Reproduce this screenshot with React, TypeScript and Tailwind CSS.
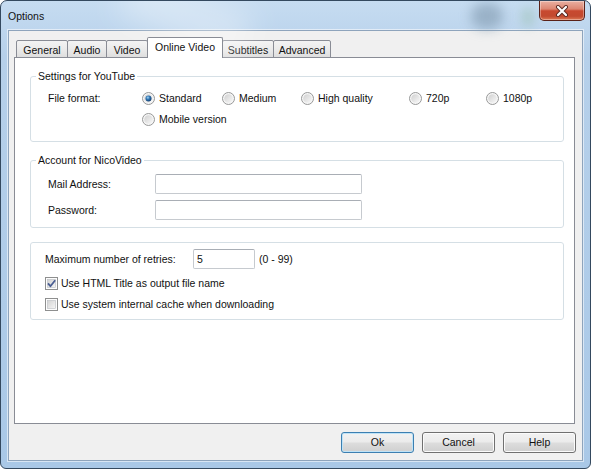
import type { ReactNode } from 'react'

const ui = "font-['Liberation_Sans',Arial,sans-serif] text-[10.5px] leading-[13px] text-[#111]"

const tabs = [
  { label: 'General', cls: 'w-[52px]' },
  { label: 'Audio', cls: 'w-[40px] -ml-px' },
  { label: 'Video', cls: 'w-[42px] -ml-px' },
  { label: 'Online Video', cls: 'w-[76px] -ml-px', active: true },
  { label: 'Subtitles', cls: 'w-[52px] -ml-px' },
  { label: 'Advanced', cls: 'w-[58px] -ml-px' },
]

const formats = [
  { label: 'Standard', cls: 'w-[80px]', checked: true },
  { label: 'Medium', cls: 'w-[79px]' },
  { label: 'High quality', cls: 'w-[108px]' },
  { label: '720p', cls: 'w-[77px]' },
  { label: '1080p', cls: 'w-[60px]' },
]

// shared gradients for the radio / checkbox glyphs
function Defs() {
  return (
    <svg className="absolute w-0 h-0" aria-hidden>
      <defs>
        <linearGradient id="ctl-fill" x1="0" y1="0" x2="1" y2="1">
          <stop offset="0" stopColor="#d0d0d0" />
          <stop offset="1" stopColor="#f8f8f8" />
        </linearGradient>
        <radialGradient id="ctl-dot" cx="40%" cy="35%" r="65%">
          <stop offset="0" stopColor="#a6d6f4" />
          <stop offset="0.45" stopColor="#3479b6" />
          <stop offset="1" stopColor="#123f72" />
        </radialGradient>
        <linearGradient id="cb-fill" x1="0" y1="0" x2="1" y2="1">
          <stop offset="0" stopColor="#d2d2d2" />
          <stop offset="1" stopColor="#f6f6f6" />
        </linearGradient>
      </defs>
    </svg>
  )
}

function Radio({ checked }: { checked?: boolean }) {
  return (
    <svg width="13" height="13" viewBox="0 0 13 13" className="shrink-0">
      <circle cx="6.5" cy="6.5" r="6" fill="#f6f6f6" stroke="#979898" />
      <circle cx="6.5" cy="6.5" r="4.3" fill="url(#ctl-fill)" />
      {checked && <circle cx="6.5" cy="6.5" r="3" fill="url(#ctl-dot)" />}
    </svg>
  )
}

function Checkbox({ checked }: { checked?: boolean }) {
  return (
    <svg width="13" height="13" viewBox="0 0 13 13" className="shrink-0">
      <rect x="0.5" y="0.5" width="12" height="12" fill="#fdfdfd" stroke="#8e8f8f" />
      <rect x="2.5" y="2.5" width="8" height="8" fill="url(#cb-fill)" stroke="#b9bcc1" strokeWidth="0.6" />
      {checked && (
        <path d="M3 6.4 L5.4 9.2 L10.2 3.2" fill="none" stroke="#4a5e92" strokeWidth="1.8" strokeLinejoin="round" />
      )}
    </svg>
  )
}

function TextBox({ cls, value }: { cls: string; value?: string }) {
  return (
    <div className={`h-[20px] flex items-center pl-[3px] bg-white border border-[#c6cacf] border-t-[#a9aeb5] rounded-[2px] ${cls}`}>
      {value}
    </div>
  )
}

function Group({ title, cls, children }: { title?: string; cls: string; children: ReactNode }) {
  return (
    <div className={`flex flex-col border border-[#d5dfe5] rounded-[3px] ${cls}`}>
      {title && <span className="self-start -mt-[7px] ml-[5px] px-[2px] bg-white">{title}</span>}
      {children}
    </div>
  )
}

function Button({ label, primary }: { label: string; primary?: boolean }) {
  return (
    <button
      className={`w-[73px] h-[21px] rounded-[3px] border bg-[linear-gradient(180deg,#f2f2f2_0%,#ebebeb_48%,#dddddd_52%,#cfcfcf_100%)] ${
        primary
          ? 'border-[#3c7fb1] shadow-[inset_0_0_0_1px_#bfe3f7]'
          : 'border-[#707070] shadow-[inset_0_0_0_1px_#fbfbfb]'
      }`}
    >
      {label}
    </button>
  )
}

function CloseButton() {
  return (
    <div className="relative mr-[5px] w-[46px] h-[20px] flex items-center justify-center rounded-b-[5px] border border-t-0 border-[#5a2118] bg-[linear-gradient(180deg,#e9b0a2_0%,#dc8672_42%,#c8492f_52%,#c24a2f_80%,#dd7a55_100%)] shadow-[inset_0_0_0_1px_rgba(255,255,255,0.35)]">
      <svg width="14" height="12" viewBox="0 0 14 12">
        <path d="M3 2 L11 10 M11 2 L3 10" stroke="#5b2a22" strokeWidth="4" strokeLinecap="round" />
        <path d="M3 2 L11 10 M11 2 L3 10" stroke="#ffffff" strokeWidth="2.2" strokeLinecap="round" />
      </svg>
    </div>
  )
}

export default function App() {
  return (
    <div className={`${ui} relative w-[591px] h-[469px] overflow-hidden flex flex-col rounded-t-[7px] rounded-b-[6px] border border-[#34495f] bg-[linear-gradient(180deg,#c6dcf1_0%,#b6d0ea_12%,#a9c8e7_100%)]`}>
      <Defs />

      {/* title bar */}
      <div className="relative h-[29px] flex items-start justify-between">
        <div className="pointer-events-none absolute left-[120px] -top-[14px] h-[56px] w-[130px] rotate-[25deg] bg-white/30 blur-[14px]" />
        <div className="pointer-events-none absolute left-[470px] top-[2px] h-[26px] w-[32px] rounded-full bg-[#7f98ae]/60 blur-[6px]" />
        <div className="pointer-events-none absolute left-[520px] top-[6px] h-[20px] w-[14px] rounded-full bg-[#9fc3b7]/50 blur-[5px]" />
        <span className="relative mt-[8px] ml-[7px] text-[10.5px] leading-[14px]">Options</span>
        <CloseButton />
      </div>

      {/* client area */}
      <div className="flex-1 mx-[7px] mb-[7px] flex flex-col pt-[6px] pl-[5px] pr-[7px] bg-[#f0f0f0] border border-[#8ea4bc] shadow-[0_0_0_1px_rgba(255,255,255,0.55)]">
        <div className="h-[21px] flex items-end pl-[2px]">
          {tabs.map((t) =>
            t.active ? (
              <div
                key={t.label}
                className={`relative z-10 h-[21px] flex justify-center pt-[3px] bg-white border border-b-0 border-[#898c95] rounded-t-[2px] ${t.cls}`}
              >
                {t.label}
              </div>
            ) : (
              <div
                key={t.label}
                className={`h-[18px] flex justify-center pt-[3px] border border-[#898c95] rounded-t-[2px] bg-[linear-gradient(180deg,#f3f3f3_0%,#ebebeb_50%,#dedede_100%)] ${t.cls}`}
              >
                {t.label}
              </div>
            ),
          )}
        </div>

        <div className="-mt-px h-[367px] flex flex-col pl-[15px] pr-[10px] bg-white border border-[#898c95]">
          <Group title="Settings for YouTube" cls="mt-[18px] h-[66px]">
            <div className="mt-[5px] h-[21px] flex items-center pl-[17px]">
              <span className="w-[94px]">File format:</span>
              {formats.map((f) => (
                <label key={f.label} className={`flex items-center gap-[4px] ${f.cls}`}>
                  <Radio checked={f.checked} />
                  {f.label}
                </label>
              ))}
            </div>
            <div className="h-[21px] flex items-center pl-[111px]">
              <label className="flex items-center gap-[4px]">
                <Radio />
                Mobile version
              </label>
            </div>
          </Group>

          <Group title="Account for NicoVideo" cls="mt-[18px] h-[68px]">
            <div className="mt-[7px] flex items-center pl-[17px]">
              <span className="w-[107px]">Mail Address:</span>
              <TextBox cls="w-[207px]" />
            </div>
            <div className="mt-[6px] flex items-center pl-[17px]">
              <span className="w-[107px]">Password:</span>
              <TextBox cls="w-[207px]" />
            </div>
          </Group>

          <Group cls="mt-[14px] h-[78px] pt-[6px]">
            <div className="flex items-center pl-[14px]">
              <span className="w-[148px]">Maximum number of retries:</span>
              <TextBox cls="w-[62px]" value="5" />
              <span className="ml-[4px]">(0 - 99)</span>
            </div>
            <label className="mt-[4px] h-[21px] flex items-center gap-[3px] pl-[14px]">
              <Checkbox checked />
              Use HTML Title as output file name
            </label>
            <label className="h-[21px] flex items-center gap-[3px] pl-[14px]">
              <Checkbox />
              Use system internal cache when downloading
            </label>
          </Group>
        </div>

        <div className="mt-[8px] -mr-px flex justify-end gap-[8px]">
          <Button label="Ok" primary />
          <Button label="Cancel" />
          <Button label="Help" />
        </div>
      </div>
    </div>
  )
}
